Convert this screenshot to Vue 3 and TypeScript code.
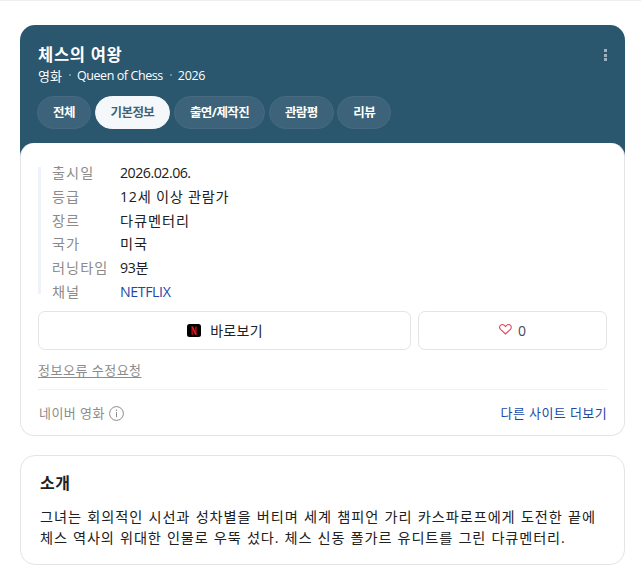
<template>
  <div class="page">
    <section class="movie-card">
      <header class="movie-header">
        <div class="title-row">
          <h2 class="title">체스의 여왕</h2>
          <button class="more-btn" aria-label="더보기">
            <i></i><i></i><i></i>
          </button>
        </div>
        <div class="subtitle">
          <span>영화</span>
          <span class="dot"></span>
          <span class="original">Queen of Chess</span>
          <span class="dot"></span>
          <span class="year">2026</span>
        </div>
        <nav class="tabs">
          <button
            v-for="tab in tabs"
            :key="tab"
            class="tab"
            :class="{ active: tab === activeTab }"
            @click="activeTab = tab"
          >{{ tab }}</button>
        </nav>
      </header>

      <div class="movie-body">
        <dl class="info-list">
          <div v-for="item in infos" :key="item.label" class="info-row">
            <dt>{{ item.label }}</dt>
            <dd :class="item.type"><a v-if="item.type === 'link'" href="#">{{ item.value }}</a><template v-else>{{ item.value }}</template></dd>
          </div>
        </dl>

        <div class="button-row">
          <button class="btn watch">
            <svg width="14" height="13" viewBox="0 0 14 13">
              <rect width="14" height="13" rx="2.5" fill="#000" />
              <path d="M4.4 2.5h1.7v8.2H4.4zM8 2.5h1.7v8.2H8z" fill="#a60c14" />
              <path d="M4.4 2.5h1.7l3.6 8.2H8z" fill="#e21b24" />
            </svg>
            <span>바로보기</span>
          </button>
          <button class="btn like" @click="toggleLike">
            <svg width="13" height="11" viewBox="0 0 14 12">
              <path
                d="M7 10.9 1.6 5.8C.4 4.6.4 2.7 1.5 1.6c1.2-1.2 3.1-1.2 4.3 0L7 2.8l1.2-1.2c1.2-1.2 3.1-1.2 4.3 0 1.1 1.1 1.1 3-.1 4.2z"
                :fill="liked ? '#df4c5c' : 'none'"
                stroke="#df4c5c"
                stroke-width="1.2"
                stroke-linejoin="round"
              />
            </svg>
            <span>{{ likeCount }}</span>
          </button>
        </div>

        <a href="#" class="report-link">정보오류 수정요청</a>

        <footer class="source-row">
          <span class="source">
            <span>네이버 영화</span>
            <svg width="15" height="15" viewBox="0 0 15 15">
              <circle cx="7.5" cy="7.5" r="6.9" fill="none" stroke="#8b8b8b" />
              <path d="M7.5 6.2v5" stroke="#8b8b8b" />
              <circle cx="7.5" cy="4.2" r=".75" fill="#8b8b8b" />
            </svg>
          </span>
          <a href="#" class="other-sites">다른 사이트 더보기</a>
        </footer>
      </div>
    </section>

    <section class="intro-card">
      <h3>소개</h3>
      <p>
        <span v-for="line in intro" :key="line">{{ line }}</span>
      </p>
    </section>
  </div>
</template>

<script setup lang="ts">
import { ref, computed } from 'vue'

interface InfoItem {
  label: string
  value: string
  type?: 'num' | 'mixed' | 'runtime' | 'link'
}

const tabs = ['전체', '기본정보', '출연/제작진', '관람평', '리뷰']
const activeTab = ref('기본정보')

const infos: InfoItem[] = [
  { label: '출시일', value: '2026.02.06.', type: 'num' },
  { label: '등급', value: '12세 이상 관람가', type: 'mixed' },
  { label: '장르', value: '다큐멘터리' },
  { label: '국가', value: '미국' },
  { label: '러닝타임', value: '93분', type: 'runtime' },
  { label: '채널', value: 'NETFLIX', type: 'link' }
]

const intro = [
  '그녀는 회의적인 시선과 성차별을 버티며 세계 챔피언 가리 카스파로프에게 도전한 끝에',
  '체스 역사의 위대한 인물로 우뚝 섰다. 체스 신동 폴가르 유디트를 그린 다큐멘터리.'
]

const liked = ref(false)
const likeCount = computed(() => (liked.value ? 1 : 0))

function toggleLike() {
  liked.value = !liked.value
}
</script>

<style>
body {
  background: #fff;
}
</style>

<style scoped>
.page {
  box-sizing: border-box;
  min-height: 584px;
  padding: 24px 16px 19px 20px;
  border-top: 1px solid #efefef;
  font-family: 'Open Sans', 'Noto Sans CJK KR', sans-serif;
  color: #202020;
}

button {
  padding: 0;
  border: none;
  background: none;
  font-family: inherit;
  cursor: pointer;
}

a {
  text-decoration: none;
}

.movie-card {
  border-radius: 15px;
  background: linear-gradient(#2a566e 160px, #fff 160px);
}

.movie-header {
  height: 118px;
  box-sizing: border-box;
  padding: 17px 17px 0;
}

.title-row {
  display: flex;
  justify-content: space-between;
  align-items: center;
  height: 24px;
  padding-left: 1px;
}

.title {
  margin: 0;
  font-size: 16.5px;
  font-weight: 700;
  letter-spacing: 0.7px;
  color: #fff;
}

.more-btn {
  display: flex;
  flex-direction: column;
  gap: 1.5px;
  margin-top: 2px;
  margin-right: 1px;
}

.more-btn i {
  width: 3px;
  height: 3px;
  background: #9db2be;
}

.subtitle {
  display: flex;
  align-items: center;
  height: 18px;
  padding-left: 1px;
  font-size: 13px;
  color: #fff;
}

.subtitle .original {
  font-size: 12.5px;
  letter-spacing: -0.42px;
}

.subtitle .year {
  font-size: 12.5px;
  letter-spacing: -0.3px;
}

.dot {
  width: 2px;
  height: 2px;
  margin: 0 6px 0 7px;
  background: #6f8c9c;
}

.tabs {
  display: flex;
  gap: 3.6px;
  margin-top: 12px;
}

.tab {
  height: 33px;
  padding: 0 15px;
  border: 1px solid #466b80;
  border-radius: 17px;
  background: #3c6379;
  font-size: 12.5px;
  font-weight: 700;
  line-height: 32px;
  letter-spacing: -0.55px;
  white-space: nowrap;
  color: #fff;
}

.tab.active {
  border-color: #f5f8fb;
  background: #f5f8fb;
  color: #3f6377;
}

.movie-body {
  box-sizing: border-box;
  height: 293px;
  padding: 18px 17px 0;
  border: 1px solid #e2e4e7;
  border-top: none;
  border-radius: 14px;
  background: #fff;
}

.info-list {
  display: flex;
  flex-direction: column;
  height: 143px;
  margin: 0;
  position: relative;
}

.info-list::before {
  content: '';
  position: absolute;
  top: 6px;
  left: 0;
  width: 3px;
  height: 127px;
  background: #edf3f9;
}

.info-row {
  display: flex;
  height: 23.8px;
  padding-left: 14px;
  font-size: 14.2px;
  line-height: 23px;
}

.info-row dt {
  width: 68px;
  letter-spacing: 1.05px;
  color: #8b8b8b;
}

.info-row dd {
  margin: 0;
  letter-spacing: 0.95px;
}

.info-row dd.num {
  letter-spacing: -0.5px;
}

.info-row dd.mixed {
  letter-spacing: 0.75px;
}

.info-row dd.runtime {
  letter-spacing: -0.3px;
}

.info-row dd.link {
  letter-spacing: -0.4px;
}

.info-row a {
  color: #1a49a8;
}

.button-row {
  display: flex;
  gap: 7px;
  margin-top: 7px;
}

.btn {
  display: flex;
  align-items: center;
  justify-content: center;
  box-sizing: border-box;
  height: 39px;
  border: 1px solid #e2e4e7;
  border-radius: 7px;
  background: #fff;
  font-size: 14px;
  color: #202020;
}

.btn span {
  padding-bottom: 1px;
}

.watch {
  width: 373px;
  gap: 9px;
  padding-left: 1px;
  letter-spacing: 0.3px;
}

.like {
  flex: 1;
  gap: 6px;
  font-size: 14px;
  color: #444b55;
}

.like span {
  padding: 0;
}

.like svg {
  margin-bottom: 2px;
}

.report-link {
  display: block;
  width: max-content;
  height: 20px;
  margin-top: 10px;
  border: none;
  font-size: 13px;
  line-height: 20px;
  letter-spacing: 0.5px;
  color: #8b8b8b;
  text-decoration: underline;
  text-underline-offset: 2px;
}

.source-row {
  display: flex;
  align-items: center;
  justify-content: space-between;
  height: 46px;
  margin-top: 9px;
  border-top: 1px solid #f1f1f1;
  font-size: 13px;
}

.source {
  display: flex;
  align-items: center;
  gap: 4px;
  padding-left: 1px;
  letter-spacing: 0.45px;
  color: #8b8b8b;
}

.source span,
.other-sites {
  padding-bottom: 2px;
}

.other-sites {
  letter-spacing: 0.4px;
  color: #1a49a8;
}

.intro-card {
  box-sizing: border-box;
  height: 110px;
  margin-top: 19px;
  padding: 15px 19px 0;
  border: 1px solid #e2e4e7;
  border-radius: 15px;
}

.intro-card h3 {
  margin: 0;
  font-size: 16px;
  font-weight: 700;
  line-height: 24px;
  letter-spacing: 0.6px;
}

.intro-card p {
  margin: 11px 0 0;
  font-size: 14.2px;
  line-height: 21px;
  letter-spacing: 0.92px;
  word-spacing: 0.7px;
}

.intro-card p span {
  display: block;
  white-space: nowrap;
}

.intro-card p span:last-child {
  letter-spacing: 0.85px;
}
</style>
